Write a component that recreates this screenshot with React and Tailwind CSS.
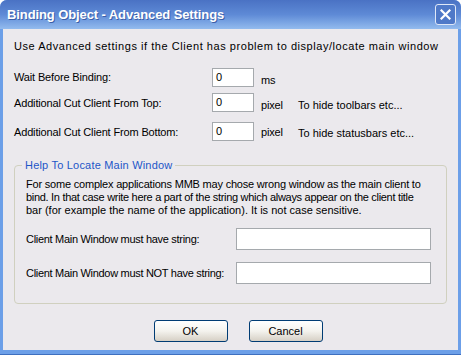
import React from "react";

const font = { fontFamily: '"Liberation Sans", Arial, sans-serif' };

function TextBox({ className = "", value = "" }) {
  return (
    <div
      className={`border border-[#a5a9ad] bg-white flex items-center pl-[3px] text-[11px] text-black ${className}`}
    >
      {value}
    </div>
  );
}

function XpButton({ children }) {
  return (
    <button className="w-[74px] h-[22px] rounded-[3px] border border-[#003c74] bg-gradient-to-b from-white via-[#f4f3ee] to-[#d6d0c5] text-[11px] text-black flex items-center justify-center">
      {children}
    </button>
  );
}

export default function App() {
  return (
    <div
      className="w-[461px] h-[355px] flex flex-col bg-[#6c9fe8] rounded-t-[7px] overflow-hidden"
      style={font}
    >
      {/* Title bar */}
      <div className="h-[29px] shrink-0 flex items-center justify-between pl-[7px] pr-[5px] bg-gradient-to-b from-[#4a72c4] via-[#5e8ad6] to-[#93bbee]">
        <span className="text-white font-bold text-[13px] tracking-[-0.1px] [text-shadow:1px_1px_0_#3b5ea8]">
          Binding Object - Advanced Settings
        </span>
        <div className="w-[21px] h-[21px] rounded-[3px] border border-[#dfe8f7] bg-[#4f79c8] flex items-center justify-center">
          <svg width="11" height="11" viewBox="0 0 11 11">
            <path d="M1.5 1.5 L9.5 9.5 M9.5 1.5 L1.5 9.5" stroke="white" strokeWidth="2.2" strokeLinecap="square" />
          </svg>
        </div>
      </div>

      {/* Frame + body */}
      <div className="flex-1 px-[3px] pb-[4px] border-b border-[#3e6fbf]">
        <div className="h-full bg-[#ebe9ed] text-[11px] text-black pl-[11px] pr-[11px]">
          <div className="pt-[11px] leading-[13px] whitespace-nowrap tracking-[0.55px]">
            Use Advanced settings if the Client has problem to display/locate main window
          </div>

          {/* Rows */}
          <div className="mt-[15px] flex items-center h-[19px] tracking-[-0.15px]">
            <span className="w-[198px]">Wait Before Binding:</span>
            <TextBox className="w-[42px] h-[19px]" value="0" />
            <span className="ml-[7px] mt-[6px]">ms</span>
          </div>
          <div className="mt-[6px] flex items-center h-[19px] tracking-[-0.15px]">
            <span className="w-[198px] mt-[2px]">Additional Cut Client From Top:</span>
            <TextBox className="w-[42px] h-[19px]" value="0" />
            <span className="ml-[7px] mt-[6px] w-[37px]">pixel</span>
            <span className="mt-[6px] tracking-[0px]">To hide toolbars etc...</span>
          </div>
          <div className="mt-[10px] flex items-center h-[19px] tracking-[-0.15px]">
            <span className="w-[198px] mt-[2px]">Additional Cut Client From Bottom:</span>
            <TextBox className="w-[42px] h-[19px]" value="0" />
            <span className="ml-[7px] mt-[2px] w-[37px]">pixel</span>
            <span className="mt-[4px] tracking-[0px]">To hide statusbars etc...</span>
          </div>

          {/* Group box */}
          <div className="relative mt-[24px] h-[139px] border border-[#d0d0bf] rounded-[4px] pl-[11px] pr-[4px]">
            <span className="absolute -top-[8px] left-[7px] px-[3px] bg-[#ebe9ed] text-[#1e56c8] leading-[14px] tracking-[0.2px]">
              Help To Locate Main Window
            </span>
            <div className="pt-[12px] leading-[13px] whitespace-nowrap">
              <div className="tracking-[-0.2px]">For some complex applications MMB may chose wrong window as the main client to</div>
              <div className="tracking-[-0.3px]">bind. In that case write here a part of the string which always appear on the client title</div>
              <div className="tracking-[0px]">bar (for example the name of the application). It is not case sensitive.</div>
            </div>
            <div className="mt-[11px] flex items-center tracking-[-0.3px]">
              <span className="w-[210px]">Client Main Window must have string:</span>
              <TextBox className="w-[195px] h-[22px]" />
            </div>
            <div className="mt-[12px] flex items-center tracking-[-0.3px]">
              <span className="w-[210px]">Client Main Window must NOT have string:</span>
              <TextBox className="w-[195px] h-[22px]" />
            </div>
          </div>

          {/* Buttons */}
          <div className="mt-[16px] flex justify-center gap-[21px] pl-[15px]">
            <XpButton>OK</XpButton>
            <XpButton>Cancel</XpButton>
          </div>
        </div>
      </div>
    </div>
  );
}
